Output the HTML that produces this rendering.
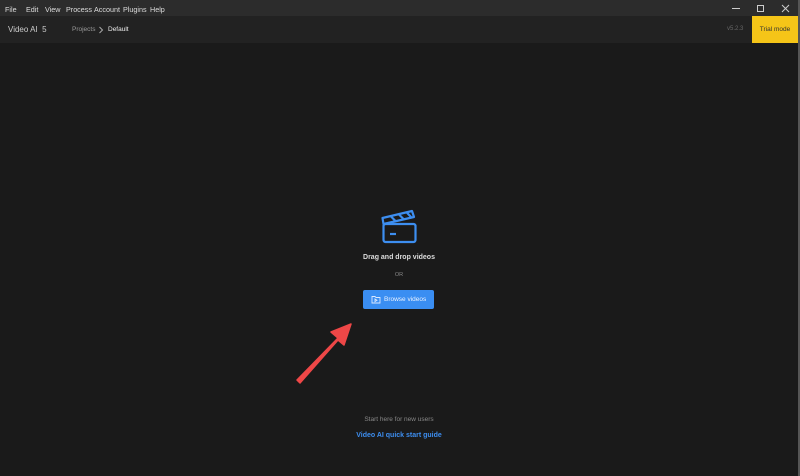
<!DOCTYPE html>
<html><head><meta charset="utf-8"><style>
*{margin:0;padding:0;box-sizing:border-box}
body{width:800px;height:476px;background:#1a1a1a;font-family:"Liberation Sans",sans-serif;position:relative;overflow:hidden;color:#ddd}
.tb{position:absolute;left:0;top:0;width:800px;height:16px;background:#2c2c2c;font-size:7.2px;color:#ddd}
.tb span{position:absolute;top:5px}
.hd{position:absolute;left:0;top:16px;width:800px;height:27px;background:#222}
.rb{position:absolute;right:0;top:0;width:2px;height:476px;background:#555}
.t{position:absolute;white-space:nowrap}
</style></head><body>
<div class="tb">
<span style="left:5px">File</span><span style="left:26px">Edit</span><span style="left:45px">View</span><span style="left:66px">Process</span><span style="left:94px">Account</span><span style="left:123px">Plugins</span><span style="left:150px">Help</span>
<svg style="position:absolute;left:730px;top:3px" width="66" height="11"><line x1="2" y1="5.5" x2="10" y2="5.5" stroke="#ccc"/><rect x="27.5" y="2.5" width="6" height="6" fill="none" stroke="#ccc"/><path d="M52 2L59 9M59 2L52 9" stroke="#ccc"/></svg>
</div>
<div class="hd">
<div class="t" style="left:8px;top:9px;font-size:8px;color:#ccc">Video AI&nbsp; 5</div>
<div class="t" style="left:72px;top:10px;font-size:6.5px;color:#999">Projects</div>
<svg style="position:absolute;left:98px;top:10px" width="6" height="8"><path d="M1.5 1L4.5 4L1.5 7" stroke="#aaa" fill="none"/></svg>
<div class="t" style="left:108px;top:10px;font-size:6.5px;color:#eee">Default</div>
<div class="t" style="left:727px;top:10px;font-size:6px;color:#666">v5.2.3</div>
<div style="position:absolute;left:752px;top:0;width:46px;height:27px;background:#f5c518;color:#333;font-size:6.5px;text-align:center;line-height:27px">Trial mode</div>
</div>
<div class="rb"></div>
<svg style="position:absolute;left:380px;top:209px" width="40" height="36" fill="none" stroke="#3d8ef0" stroke-width="2.2" stroke-linejoin="round">
<rect x="3.5" y="15" width="32" height="18" rx="2"/>
<path d="M3.5 15L2.5 9L32 2L34 8Z"/>
<path d="M11 7.5L16 12.5M19 5.5L24 10.5M27 3.8L31 8"/>
<line x1="10" y1="25" x2="16" y2="25"/>
</svg>
<div class="t" style="left:0;width:798px;text-align:center;top:254px;font-size:7px;font-weight:bold;color:#ddd">Drag and drop videos</div>
<div class="t" style="left:0;width:798px;text-align:center;top:272px;font-size:5.5px;color:#888">OR</div>
<div style="position:absolute;left:363px;top:290px;width:71px;height:19px;background:#3a8ef2;border-radius:2px;color:#eaf2ff;font-size:6.5px;line-height:19px;padding-left:21px">Browse videos</div>
<svg style="position:absolute;left:371px;top:295px" width="10" height="9" fill="none" stroke="#dbe8ff" stroke-width="0.9"><path d="M1 1.5H4L5 2.5H9V8H1Z"/><path d="M4 4L6 5.3L4 6.6Z"/></svg>
<svg style="position:absolute;left:0;top:0" width="800" height="476"><path d="M297 380L338 338L331 332L351 324L344 345L338 340L300 383Z" fill="#ee4747" stroke="#ee4747" stroke-width="1.5" stroke-linejoin="round"/></svg>
<div class="t" style="left:0;width:798px;text-align:center;top:416px;font-size:6.5px;color:#888">Start here for new users</div>
<div class="t" style="left:0;width:798px;text-align:center;top:432px;font-size:7px;font-weight:bold;color:#3d8ef0">Video AI quick start guide</div>
</body></html>
